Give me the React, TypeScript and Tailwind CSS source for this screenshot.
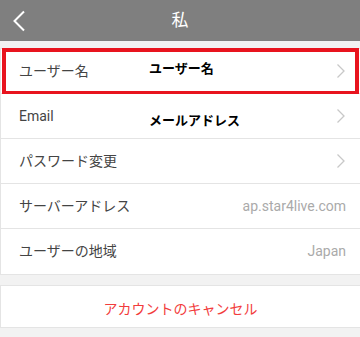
import React from "react";

const font = { fontFamily: "Roboto, 'Noto Sans CJK JP', sans-serif" };

function Chevron() {
  return (
    <svg width="10" height="16" viewBox="0 0 10 16" fill="none" className="shrink-0">
      <path d="M1.5 1.5 L8 8 L1.5 14.5" stroke="#c8c8c8" strokeWidth="1.3" />
    </svg>
  );
}

function Row({
  label,
  value,
  chevron,
  last,
  children,
}: {
  label: string;
  value?: string;
  chevron?: boolean;
  last?: boolean;
  children?: React.ReactNode;
}) {
  return (
    <div
      className={`relative flex h-[45px] items-center justify-between bg-white pl-[18px] pr-[14px] ${
        last ? "" : "border-b border-[#e4e4e4]"
      }`}
    >
      <span className="text-[14px] text-[#444444]">{label}</span>
      {value && <span className="text-[14px] text-[#aaaaaa]">{value}</span>}
      {chevron && <Chevron />}
      {children}
    </div>
  );
}

export default function App() {
  return (
    <div className="h-[337px] w-[360px] overflow-hidden bg-[#f2f2f2]" style={font}>
      <div className="relative flex h-[41px] items-center justify-center bg-[#7f7f7f]">
        <svg
          className="absolute left-[12px] top-[10px]"
          width="14"
          height="22"
          viewBox="0 0 14 22"
          fill="none"
        >
          <path d="M12 1.5 L2.5 11 L12 20.5" stroke="#ffffff" strokeWidth="2" />
        </svg>
        <span className="text-[17px] text-white">私</span>
      </div>
      <div className="mt-[7px] border-y border-l border-[#e4e4e4]">
        <Row label="ユーザー名" chevron>
          <span className="absolute left-[148px] top-[10px] text-[13px] font-bold text-black">
            ユーザー名
          </span>
          <div className="pointer-events-none absolute left-[1px] right-[1px] top-[-1px] bottom-[-2px] border-4 border-[#e8141e]" />
        </Row>
        <Row label="Email" chevron>
          <span className="absolute left-[148px] top-[17px] text-[13px] font-bold text-black">
            メールアドレス
          </span>
        </Row>
        <Row label="パスワード変更" chevron />
        <Row label="サーバーアドレス" value="ap.star4live.com" />
        <Row label="ユーザーの地域" value="Japan" last />
      </div>
      <div className="mt-[10px] flex h-[43px] items-center justify-center border-y border-l border-[#e4e4e4] bg-white pt-[6px]">
        <span className="text-[14px] text-[#f23c3c]">アカウントのキャンセル</span>
      </div>
    </div>
  );
}
